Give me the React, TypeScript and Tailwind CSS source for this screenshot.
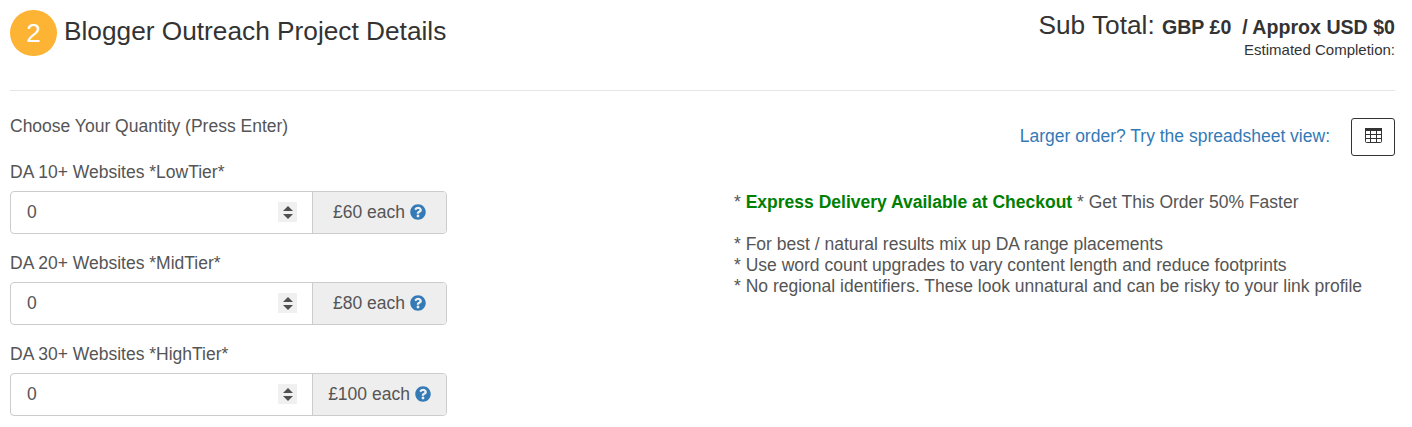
import { FaQuestionCircle } from 'react-icons/fa'

const tiers = [
  { label: 'DA 10+ Websites *LowTier*', price: '£60 each' },
  { label: 'DA 20+ Websites *MidTier*', price: '£80 each' },
  { label: 'DA 30+ Websites *HighTier*', price: '£100 each' },
]

function Spinner() {
  return (
    <div className="absolute left-[267px] top-[10px] flex h-[20px] w-[19px] flex-col items-center justify-center gap-[3px] bg-[#f0f0f0]">
      <svg width="10" height="5" viewBox="0 0 10 5"><path d="M5 0L10 5H0z" fill="#505050" /></svg>
      <svg width="10" height="5" viewBox="0 0 10 5"><path d="M0 0h10L5 5z" fill="#505050" /></svg>
    </div>
  )
}

export default function App() {
  return (
    <div className="h-[427px] overflow-hidden bg-white pl-[10px] pr-[17px] font-['Liberation_Sans',Arial,sans-serif] text-[17.5px] leading-[21px] text-[#555]">
      {/* Header */}
      <div className="flex h-[90px] items-start justify-between">
        <div className="flex items-start pt-[10px]">
          <div className="flex h-[46px] w-[47px] items-center justify-center rounded-full bg-[#fdb334] text-[26.25px] text-white">2</div>
          <h2 className="ml-[7px] mt-[6px] text-[26.25px] leading-[30px] font-normal text-[#333]">Blogger Outreach Project Details</h2>
        </div>
        <div className="pt-[10px] text-right text-[#333]">
          <div className="h-[30px] text-[26.25px] leading-[30px]">
            Sub Total: <b className="text-[19.6px]">GBP £0 &nbsp;/ Approx USD $0</b>
          </div>
          <div className="text-[15px] leading-[20px]">Estimated Completion:</div>
        </div>
      </div>
      <div className="h-px bg-[#e6e6e6]" />

      <div className="flex">
        {/* Quantity inputs */}
        <div className="w-[437px]">
          <p className="mt-[25px] h-[21px]">Choose Your Quantity (Press Enter)</p>
          <div className="mt-[25px] flex flex-col gap-[19px]">
            {tiers.map((t) => (
              <div key={t.label}>
                <label className="block h-[21px]">{t.label}</label>
                <div className="relative mt-[8px] flex h-[43px] rounded-[4px] border border-[#ccc]">
                  <div className="flex flex-1 items-center pl-[16px]">0</div>
                  <Spinner />
                  <div className="flex w-[134px] items-center justify-center gap-[5px] rounded-r-[3px] border-l border-[#ccc] bg-[#eee]">
                    {t.price}
                    <FaQuestionCircle className="mb-[2px] text-[16px] text-[#337ab7]" />
                  </div>
                </div>
              </div>
            ))}
          </div>
        </div>

        {/* Notes */}
        <div className="ml-[287px] flex-1">
          <div className="mt-[27px] flex items-center justify-end">
            <a className="mb-[2px] text-[#337ab7]">Larger order? Try the spreadsheet view:</a>
            <div className="ml-[21px] flex h-[38px] w-[44px] items-center justify-center rounded-[3px] border border-[#333]">
              <svg width="17" height="15" viewBox="0 0 17 15" className="mb-[4px]">
                <rect x="0.5" y="0.5" width="16" height="14" rx="1" fill="none" stroke="#333" />
                <rect x="0" y="0" width="17" height="3" fill="#333" />
                <path d="M0 6.5h17M0 10.5h17M5.5 0v15M11.5 0v15" stroke="#333" />
              </svg>
            </div>
          </div>
          <p className="mt-[36px]">
            * <b className="text-[#008000]">Express Delivery Available at Checkout</b> * Get This Order 50% Faster
          </p>
          <p className="mt-[21px]">* For best / natural results mix up DA range placements</p>
          <p>* Use word count upgrades to vary content length and reduce footprints</p>
          <p>* No regional identifiers. These look unnatural and can be risky to your link profile</p>
        </div>
      </div>
    </div>
  )
}
